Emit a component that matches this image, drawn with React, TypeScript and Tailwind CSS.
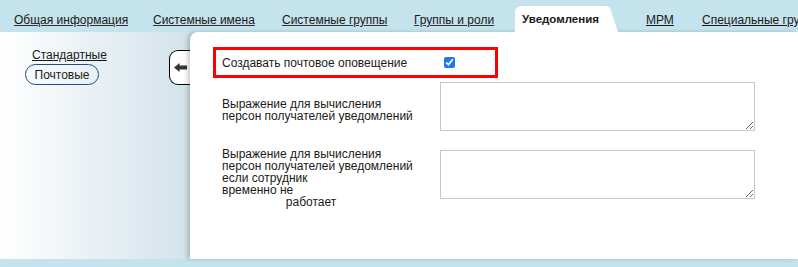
import React from 'react';

const tabs = [
  { label: 'Общая информация', w: 'w-[139px]', pl: 'pl-[14px]' },
  { label: 'Системные имена', w: 'w-[129px]', pl: 'pl-[14px]' },
  { label: 'Системные группы', w: 'w-[132px]', pl: 'pl-[14px]' },
  { label: 'Группы и роли', w: 'w-[115px]', pl: 'pl-[14px]' },
];

export default function App() {
  return (
    <div className="w-[798px] h-[267px] bg-[#c4e3ed] flex flex-col overflow-hidden font-['Liberation_Sans',Arial,sans-serif] text-[#1a1a1a]">
      {/* Tabs */}
      <div className="h-[32px] flex items-end shrink-0 text-[12px] whitespace-nowrap">
        {tabs.map((t) => (
          <div key={t.label} className={`${t.w} ${t.pl} h-[26px] pt-[2px] flex items-center shrink-0`}>
            <a href="#" className="underline decoration-[#333]">{t.label}</a>
          </div>
        ))}
        <div className="w-[103px] h-[26px] pl-[7px] pt-[2px] flex items-center shrink-0 bg-white rounded-tl-[6px] [clip-path:polygon(0_0,92px_0,95px_2px,103px_100%,0_100%)] font-bold text-[11.5px]">
          Уведомления
        </div>
        <div className="w-[70px] pl-[28px] h-[26px] pt-[2px] flex items-center shrink-0">
          <a href="#" className="underline">МРМ</a>
        </div>
        <div className="pl-[14px] h-[26px] pt-[2px] flex items-center shrink-0">
          <a href="#" className="underline">Специальные группы</a>
        </div>
      </div>

      {/* Body */}
      <div className="h-[227px] flex shrink-0">
        {/* Left menu */}
        <div className="w-[190px] shrink-0 flex justify-between bg-gradient-to-r from-white to-[#d3e2ea]">
          <div className="flex flex-col items-start pl-[25px] pt-[16px] text-[12px]">
            <a href="#" className="ml-[7px] underline leading-[14px]">Стандартные</a>
            <div className="mt-[2px] w-[74px] h-[21px] flex items-center justify-center rounded-full border-[1.5px] border-[#1d4e86]">
              Почтовые
            </div>
          </div>
          <div className="mt-[18px] w-[21px] h-[35px] border border-r-0 border-black rounded-l-[9px] bg-white flex items-center justify-end pr-[3px]">
            <svg width="13" height="9" viewBox="0 0 13 9">
              <path d="M0 4.5 L5.5 0 V2.5 H13 V6.5 H5.5 V9 Z" fill="#333" />
            </svg>
          </div>
        </div>

        {/* Main panel */}
        <div className="flex-1 bg-white rounded-tl-[8px] shadow-[-3px_0_4px_rgba(0,0,0,0.18)] pt-[15px] pl-[23px] text-[12px] leading-[12px]">
          <div className="w-[285px] h-[31px] border-[3px] border-[#ff0000] flex items-center pl-[6px]">
            <span className="w-[222px] shrink-0">Создавать почтовое оповещение</span>
            <input type="checkbox" defaultChecked className="w-[11px] h-[11px] m-0 accent-[#1f78e6]" />
          </div>

          <div className="mt-[4px] ml-[9px] flex items-start">
            <div className="w-[218px] pt-[16px] shrink-0">
              Выражение для вычисления<br />
              персон получателей уведомлений
            </div>
            <textarea className="w-[315px] h-[49px] border border-[#c8c8c8] resize-y" />
          </div>

          <div className="mt-[17px] ml-[9px] flex items-start">
            <div className="w-[218px] shrink-0">
              Выражение для вычисления<br />
              персон получателей уведомлений<br />
              если сотрудник<br />
              временно не
              <div className="w-[178px] text-center">работает</div>
            </div>
            <textarea className="mt-[2px] w-[315px] h-[49px] border border-[#c8c8c8] resize-y" />
          </div>
        </div>
      </div>
    </div>
  );
}
